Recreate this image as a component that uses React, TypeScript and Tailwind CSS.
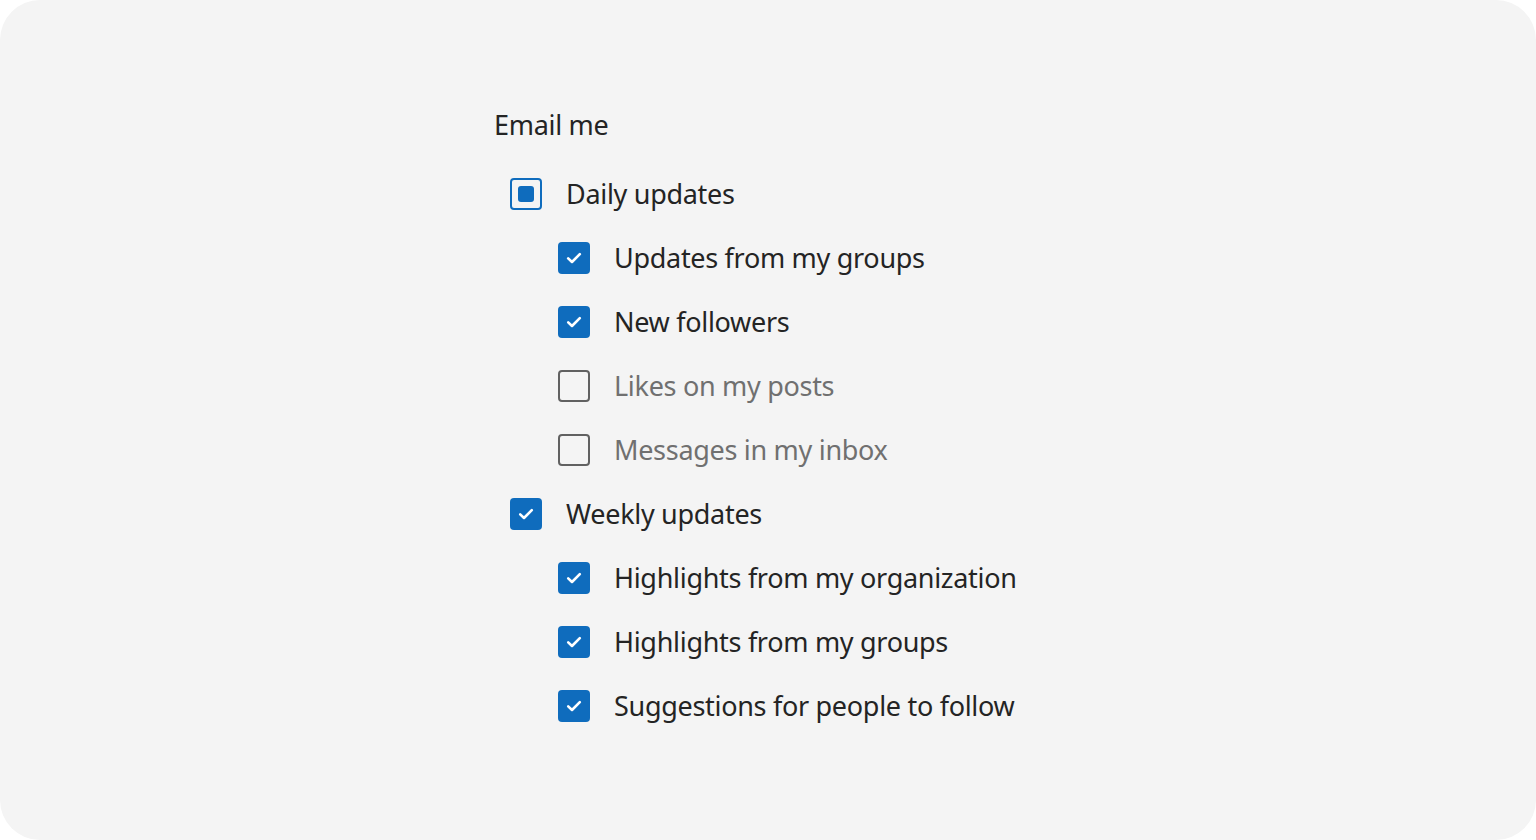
type Item = { label: string; state: "checked" | "unchecked" | "mixed" };

const groups: { parent: Item; children: Item[] }[] = [
  {
    parent: { label: "Daily updates", state: "mixed" },
    children: [
      { label: "Updates from my groups", state: "checked" },
      { label: "New followers", state: "checked" },
      { label: "Likes on my posts", state: "unchecked" },
      { label: "Messages in my inbox", state: "unchecked" },
    ],
  },
  {
    parent: { label: "Weekly updates", state: "checked" },
    children: [
      { label: "Highlights from my organization", state: "checked" },
      { label: "Highlights from my groups", state: "checked" },
      { label: "Suggestions for people to follow", state: "checked" },
    ],
  },
];

const Box = ({ state }: { state: Item["state"] }) => {
  if (state === "checked") {
    return (
      <span className="flex h-8 w-8 shrink-0 items-center justify-center rounded-[4px] bg-[#0f6cbd]">
        <svg width="32" height="32" viewBox="0 0 32 32" fill="none">
          <path
            d="M10.2 16.4 L14 20 L21.8 12.2"
            stroke="white"
            strokeWidth="2.6"
            strokeLinecap="round"
            strokeLinejoin="round"
          />
        </svg>
      </span>
    );
  }
  if (state === "mixed") {
    return (
      <span className="flex h-8 w-8 shrink-0 items-center justify-center rounded-[4px] border-2 border-[#0f6cbd]">
        <span className="h-4 w-4 rounded-[3px] bg-[#0f6cbd]" />
      </span>
    );
  }
  return <span className="h-8 w-8 shrink-0 rounded-[4px] border-2 border-[#616161]" />;
};

const Row = ({ item }: { item: Item }) => (
  <div className="flex h-16 items-center gap-6">
    <Box state={item.state} />
    <span className={item.state === "unchecked" ? "text-[#707070]" : "text-[#242424]"}>{item.label}</span>
  </div>
);

export default function App() {
  return (
    <div className="h-[840px] w-full bg-white">
      <div
        className="h-full rounded-[40px] bg-[#f4f4f4] pl-[494px] pt-[105px] text-[27px] tracking-[-0.3px] text-[#242424]"
        style={{ fontFamily: '"Noto Sans", "Open Sans", sans-serif' }}
      >
        <div className="flex h-10 items-center">Email me</div>
        <div className="mt-[17px] flex flex-col pl-4">
          {groups.map((g) => (
            <div key={g.parent.label} className="flex flex-col">
              <Row item={g.parent} />
              <div className="flex flex-col pl-12">
                {g.children.map((c) => (
                  <Row key={c.label} item={c} />
                ))}
              </div>
            </div>
          ))}
        </div>
      </div>
    </div>
  );
}
